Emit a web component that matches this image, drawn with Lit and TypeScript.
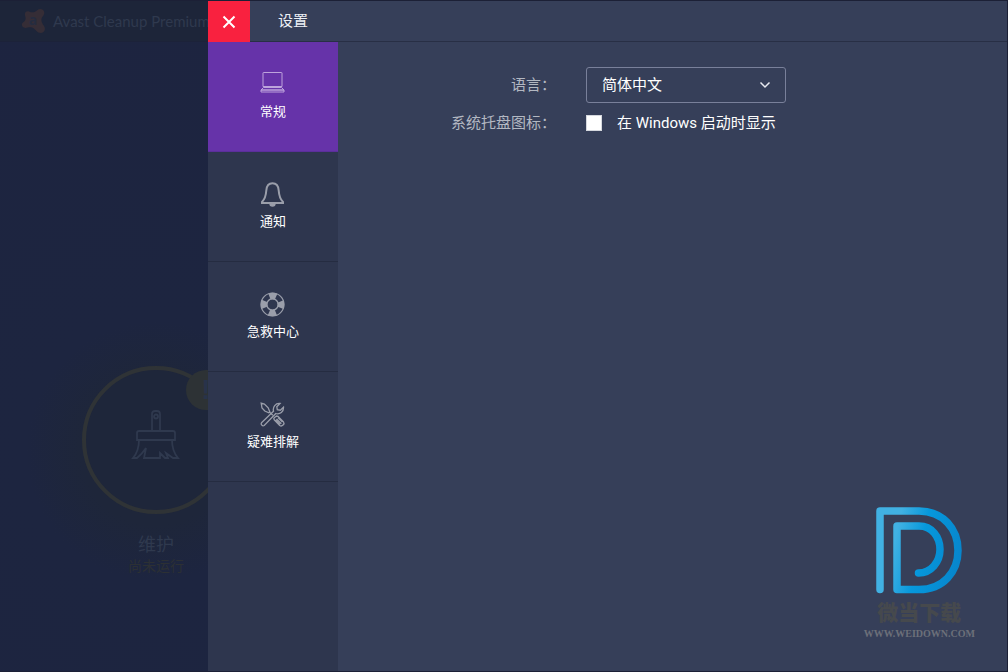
import { LitElement, html, css, svg } from "lit";
import { customElement, state } from "lit/decorators.js";

const laptop = svg`<path d="M3.500 .5h18q.5 0 .5.500v13.500H3V1q0-.5.500-.5zM3.500 15.500h18l2.500 2.500H1zM1 18h23v2H1z" stroke-width="1"/>`;
const bell = svg`<path d="M12.500 1.300c-4.200 0-5.900 3-6.200 7.200-.4 5.500-1.100 8.500-4.300 11.400v1h21v-1c-3.200-2.900-3.900-5.900-4.300-11.400-.3-4.200-2-7.200-6.200-7.200z" stroke-width="2"/><path d="M9.300 21.500h6.400a3.200 3.200 0 0 1-6.400 0z" fill="currentColor" stroke="none"/>`;
const buoy = svg`<circle cx="12.500" cy="12.500" r="11.500" stroke-width="1.200"/><circle cx="12.500" cy="12.500" r="8.500" stroke-width="6.500" stroke-dasharray="6.800 6.552" stroke-dashoffset="3.400"/><circle cx="12.500" cy="12.500" r="5.700" stroke-width="1.400"/>`;
const tools = svg`<path d="M1.200 1.200l3.200.8 3.800 3.800 1.600 4-1 1-4-1.800L2 6zM9.500 10l3.300 3.200M14.500 15.500l2-1.500 1.500.3 5.500 5.500c1.600 2.200-1.500 5.200-3.800 3.700L14.300 18l-.5-1.600zM16.500 17l4.800 4.800M18 15.500l4.500 4.500M15.500 18l4.500 4.500"/><path d="M1.500 20.800L13.500 9.200c-1-4 2-8.200 6.500-7.700l-3.200 3.200.5 3 3 .5 3.200-3c.3 4.500-3.500 7.500-7.700 6.300L4.200 23.500c-1.800 1-3.700-1-2.700-2.700z"/>`;

const sections = [
  { label: "常规", icon: laptop },
  { label: "通知", icon: bell },
  { label: "急救中心", icon: buoy },
  { label: "疑难排解", icon: tools },
];

@customElement("dimmed-home")
class DimmedHome extends LitElement {
  static styles = css`
    :host { display: flex; flex-direction: column; overflow: hidden; color: #2f394e; background: radial-gradient(circle at 156px 450px, #1e263a 74px, #1d2540 130px, #1d2440 100%); }
    .brand { display: flex; align-items: center; gap: 6px; height: 41px; padding-left: 21px; flex: none; box-sizing: border-box; background: #1d2539; border-bottom: 1px solid #1c2239; font: 15px "Lato", "Noto Sans", sans-serif; white-space: nowrap; }
    .brand svg { width: 26px; height: 26px; flex: none; }
    .brand text { font: bold 14px "Open Sans", sans-serif; fill: #252c40; text-anchor: middle; }
    .task { display: flex; flex-direction: column; align-items: center; width: 148px; margin: auto 0 96px 82px; }
    .ring { position: relative; display: grid; place-items: center; width: 148px; height: 148px; box-sizing: border-box; border: 4px solid #2f3336; border-radius: 50%; background: #1e263a; }
    .ring svg { width: 50px; height: 50px; margin-top: -12px; }
    .badge { position: absolute; top: 0; right: 0; width: 40px; height: 40px; border-radius: 50%; background: #2d3235; color: #28334a; font: bold 28px/40px "Liberation Sans", sans-serif; text-align: center; }
    h2 { margin: 17px 0 0; font: 18px/24px "Noto Sans CJK SC", sans-serif; }
    p { margin: 0; font: 14px/20px "Noto Sans CJK SC", sans-serif; color: #2c3034; }
  `;
  render() {
    return html`
      <header class="brand">
        <svg viewBox="0 0 26 26" aria-hidden="true">
          <path d="M8 3.500c3 1.500 6 1 8.500-1.500 2.500-2.500 7-.5 6.800 3-.2 3-2.500 3.500-2.800 6-.3 3 .8 4.500 2.500 7 2.500 4-.5 7.500-4.500 6.800-3.500-.8-4-4-7.500-5.300-3-1-5 .8-7.500.3-3-.8-3.500-4-1.200-5.600C4.500 12.800 5 11 4.300 8.500 3 5 5 2.500 8 3.500z" fill="#352d36"/>
          <text x="12" y="17">a</text>
        </svg>
        <span>Avast Cleanup Premium</span>
      </header>
      <section class="task">
        <div class="ring">
          <svg viewBox="0 0 50 50" fill="none" stroke="currentColor" stroke-width="1.800" aria-hidden="true">
            <path d="M21 22V5q0-3 3-3h2q3 0 3 3v17M8 22h34q2 0 2 2v7H6v-7q0-2 2-2zM8 31q0 11-6 18h4q5-4 9-10l-2 10h16v-5l5 5h3l-2-5 7 5h5q-6-7-6-18"/><circle cx="25" cy="7.500" r="2"/>
          </svg>
          <span class="badge">!</span>
        </div>
        <h2>维护</h2>
        <p>尚未运行</p>
      </section>`;
  }
}

@customElement("site-mark")
class SiteMark extends LitElement {
  static styles = css`
    :host { display: flex; flex-direction: column; align-items: center; }
    svg { width: 88px; height: 88px; }
    .name { font: 900 21px/30px "Noto Sans CJK SC", sans-serif; color: #46494d; margin: 2px 0; }
    .url { font: bold 10px/12px "Liberation Serif", serif; color: #6c7079; }
  `;
  render() {
    return html`
      <svg viewBox="0 0 88 88" fill="none" stroke="url(#mark)" stroke-width="7.500" stroke-linecap="round" stroke-linejoin="round" aria-hidden="true">
        <defs><linearGradient id="mark" gradientUnits="userSpaceOnUse" x1="0" y1="40" x2="88" y2="60"><stop offset="0.200" stop-color="#41b1e3"/><stop offset="0.500" stop-color="#0698dc"/><stop offset="1" stop-color="#0784cb"/></linearGradient></defs>
        <path d="M5 83.500V5h39c24 0 39 18 39 39.500S68 83.500 44 83.500H22V20h22c13 0 21 11 21 23.500S56 67 43.500 67"/>
      </svg>
      <span class="name">微当下载</span>
      <span class="url">WWW.WEIDOWN.COM</span>`;
  }
}

@customElement("app-root")
class AppRoot extends LitElement {
  @state() private selected = 0;
  static styles = css`
    :host { display: grid; grid-template-columns: 208px 1fr; height: 100vh; min-height: 580px; box-sizing: border-box; border: 1px solid #1c2036; border-left: 0; color: #fff; background: #363f59; font-family: Roboto, "Noto Sans CJK SC", sans-serif; }
    button, select, input { font: inherit; color: inherit; margin: 0; }
    .panel { display: flex; flex-direction: column; min-width: 0; }
    .bar { display: flex; align-items: center; height: 41px; flex: none; box-sizing: border-box; border-bottom: 1px solid #282f45; }
    .close { display: grid; place-items: center; align-self: flex-start; width: 42px; height: 41px; padding: 0; border: 0; background: #f9213f; }
    .close svg { width: 14px; height: 14px; }
    h1 { margin: 0 0 0 28px; font-size: 15px; line-height: 22px; font-weight: 400; color: #edf0f5; }
    .body { flex: 1; display: grid; grid-template-columns: 130px 1fr; min-height: 0; }
    nav { background: #2e364e; }
    .tab { display: flex; flex-direction: column; align-items: center; gap: 4px; width: 100%; height: 110px; padding: 30px 0 0; box-sizing: border-box; border: 0; border-bottom: 1px solid #252c41; background: none; font-size: 13px; line-height: 20px; }
    .tab svg { width: 26px; height: 26px; color: #9a9eaa; }
    .on { background: #6633a9; border-color: #5b2f9b; }
    .on svg { color: #bda3dc; }
    main { display: flex; flex-direction: column; justify-content: space-between; padding: 25px 0 31px; font-size: 15px; }
    .form { display: grid; grid-template-columns: 218px 1fr; column-gap: 30px; row-gap: 8px; align-items: center; }
    .name { text-align: right; line-height: 22px; color: #b3b8c2; }
    .pick { display: grid; width: 200px; align-items: center; }
    .pick > * { grid-area: 1 / 1; }
    select { appearance: none; height: 36px; padding: 0 15px; border: 1px solid #79809a; border-radius: 3px; background: transparent; }
    .pick svg { justify-self: end; margin-right: 15px; width: 12px; height: 8px; pointer-events: none; }
    .check { display: flex; align-items: center; gap: 15px; line-height: 24px; }
    .check input { appearance: none; width: 16px; height: 16px; background: #fff; border: 1px solid #d5d8de; }
    .check input:checked { background: #6633a9; }
    site-mark { align-self: flex-end; margin-right: 32px; }
  `;
  render() {
    return html`
      <dimmed-home></dimmed-home>
      <div class="panel">
        <header class="bar">
          <button class="close" aria-label="关闭"><svg viewBox="0 0 14 14" stroke="#fff" stroke-width="2"><path d="M1.500 1.500l11 11m0-11l-11 11"/></svg></button>
          <h1>设置</h1>
        </header>
        <div class="body">
          <nav>
            ${sections.map((s, i) => html`<button class="tab ${i === this.selected ? "on" : ""}" @click=${() => (this.selected = i)}>
              <svg viewBox="0 0 26 26" fill="none" stroke="currentColor" stroke-width="1.300" aria-hidden="true">${s.icon}</svg><span>${s.label}</span>
            </button>`)}
          </nav>
          <main>
            <div class="form">
              <label class="name" for="language">语言：</label>
              <div class="pick">
                <select id="language"><option>简体中文</option></select>
                <svg viewBox="0 0 12 8" fill="none" stroke="#e8eaf0" stroke-width="1.500" aria-hidden="true"><path d="M1.500 1.500L6 6l4.500-4.500"/></svg>
              </div>
              <span class="name" id="tray">系统托盘图标：</span>
              <label class="check"><input type="checkbox" aria-describedby="tray" /><span>在 Windows 启动时显示</span></label>
            </div>
            <site-mark></site-mark>
          </main>
        </div>
      </div>`;
  }
}
